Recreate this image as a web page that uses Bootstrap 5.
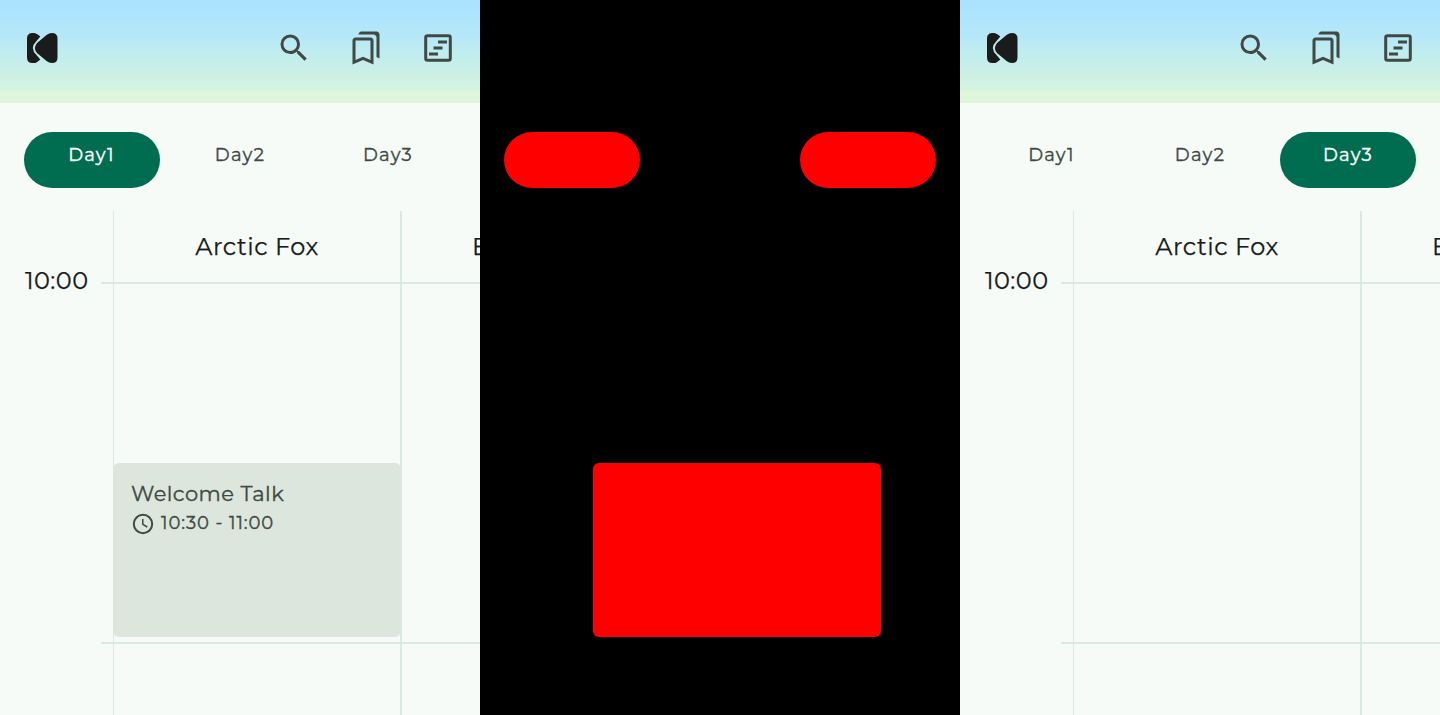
<!DOCTYPE html>
<html lang="en">
<head>
<meta charset="utf-8">
<meta name="viewport" content="width=device-width, initial-scale=1">
<title>Timetable comparison</title>
<link href="https://cdn.jsdelivr.net/npm/bootstrap@5.3.0/dist/css/bootstrap.min.css" rel="stylesheet">
<style>
body{font-family:Montserrat,Inter,"Open Sans",sans-serif;color:#191c1a;background:#f6fbf7;-webkit-text-stroke:.25px currentColor}
.screen{height:715px;background:#f6fbf7}
.diff{background:#000}
.topbar{height:103px;padding:0 24px 7px 27px;background:linear-gradient(#abe3ff 0,#abe3ff 10px,#b5e8f7 36px,#c1edef 55px,#cdf0e5 76px,#d4f3e2 90px,#ddf6dd 92px,#dff6dc 100%)}
.actions{gap:36px;color:#404943}
.topbar svg,.session svg{display:block}
.days{padding:29px 24px 0;gap:12px;height:108px}
.day{height:56px;width:136px;flex:none;border-radius:28px;text-align:center;font-size:18px;line-height:24px;padding:11px 0 0;letter-spacing:1.25px;color:#404943;-webkit-text-stroke-width:.35px}
.day:first-child{padding-right:1px}
.day.on{background:#006c50;color:#fff}
.hit{background:#f00!important}
.times{width:101px;flex:none;padding:54px 0 0 25px;font-size:24px;line-height:32px;letter-spacing:.4px}
.lines{background:linear-gradient(#dbe9e3,#dbe9e3) 0 71px/100% 2px no-repeat,linear-gradient(#dbe9e3,#dbe9e3) 0 431px/100% 2px no-repeat;padding-left:12px}
.room{width:287px;flex:none;border-left:1px solid #dbe9e3}
.next-room{border-left:2px solid #dbe9e3}
.room-name{height:71px;padding-top:20px;font-size:24px;line-height:32px;text-align:center;letter-spacing:.5px;white-space:nowrap}
.next-room .room-name{text-align:left;padding-left:70px}
.session{width:288px;height:174px;margin:181px 0 0 -1px;border-radius:6px;background:#dde6dd;color:#404943;padding:17px 18px;position:relative}
.session-title{font-size:21px;line-height:28px;letter-spacing:.45px;white-space:nowrap;-webkit-text-stroke-width:.35px}
.session-time{font-size:18px;line-height:26px;letter-spacing:.92px;gap:6px;margin-top:2px;white-space:nowrap;-webkit-text-stroke-width:.35px}
.session-time svg{margin-top:2px}
.mask{margin:275px 0 0 113px;width:288px;height:174px;border-radius:6px}
</style>
</head>
<body class="overflow-hidden">
<svg width="0" height="0" class="d-block position-absolute" aria-hidden="true">
<symbol id="logo" viewBox="0 0 31 31"><path d="M5.500 0H7Q9.500 0 13.300 3.600L9.500 8Q5.900 11.500 5.900 15Q5.900 18.500 9.500 22L13.300 26.400Q9.500 30 7 30H5.500Q0 30 0 24.500V5.500Q0 0 5.500 0Z"/><path d="M10.300 9.700L19.500 2Q22 0 25 0Q30.500 0 30.500 5.500V24.500Q30.500 30 25 30Q22 30 19.500 28L10.300 20.300Q5.400 15 10.300 9.700Z"/></symbol>
<symbol id="search" viewBox="0 0 24 24"><path d="M15.500 14h-.79l-.28-.27A6.471 6.471 0 0 0 16 9.500 6.500 6.500 0 1 0 9.500 16c1.610 0 3.090-.59 4.230-1.570l.27.28v.79l5 4.990L20.490 19l-4.990-5zm-6 0C7.010 14 5 11.990 5 9.500S7.010 5 9.500 5 14 7.010 14 9.500 11.990 14 9.500 14z"/></symbol>
<symbol id="marks" viewBox="0 0 24 24"><path d="M15 7v12.970l-4.210-1.810-.79-.34-.79.34L5 19.970V7h10m4-6H8.990C7.890 1 7 1.900 7 3h10c1.100 0 2 .9 2 2v13l2 1V3c0-1.100-.9-2-2-2zm-4 4H5c-1.100 0-2 .9-2 2v16l7-3 7 3V7c0-1.100-.9-2-2-2z"/></symbol>
<symbol id="chart" viewBox="-4 -4 36 36"><rect x="1.700" y="1.700" width="24.600" height="24.600" rx="1.800" fill="none" stroke="currentColor" stroke-width="3"/><path d="M14 6.500h9v3h-9zM9.500 12.500h9v3h-9zM5 18.500h9v3H5z"/></symbol>
</svg>
<main class="row g-0">
<section class="col-4 screen d-flex flex-column overflow-hidden">
<header class="topbar d-flex align-items-center justify-content-between">
<svg width="31" height="31" fill="#191c1a"><use href="#logo"/></svg>
<nav class="actions d-flex align-items-center">
<svg width="36" height="36" fill="currentColor"><use href="#search"/></svg>
<svg width="36" height="36" fill="currentColor"><use href="#marks"/></svg>
<svg width="36" height="36" fill="currentColor"><use href="#chart"/></svg>
</nav>
</header>
<div class="days d-flex"><div class="day on">Day1</div><div class="day">Day2</div><div class="day">Day3</div></div>
<div class="d-flex flex-grow-1">
<div class="times">10:00</div>
<div class="lines d-flex flex-grow-1 overflow-hidden">
<div class="room"><div class="room-name">Arctic Fox</div>
<div class="session"><div class="session-title">Welcome Talk</div>
<div class="session-time d-flex align-items-center"><svg width="24" height="24" viewBox="0 0 24 24" fill="none" stroke="currentColor"><circle cx="12" cy="12" r="9.200" stroke-width="2"/><path d="M11.800 7v5.300l4.500 2.700" stroke-width="1.500"/></svg><span>10:30 - 11:00</span></div></div>
</div>
<div class="next-room flex-grow-1"><div class="room-name">B</div></div>
</div></div>
</section>
<section class="col-4 screen diff overflow-hidden">
<div class="d-flex justify-content-between" style="padding:132px 24px 0"><div class="day hit"></div><div class="day hit"></div></div>
<div class="mask hit"></div>
</section>
<section class="col-4 screen d-flex flex-column overflow-hidden">
<header class="topbar d-flex align-items-center justify-content-between">
<svg width="31" height="31" fill="#191c1a"><use href="#logo"/></svg>
<nav class="actions d-flex align-items-center">
<svg width="36" height="36" fill="currentColor"><use href="#search"/></svg>
<svg width="36" height="36" fill="currentColor"><use href="#marks"/></svg>
<svg width="36" height="36" fill="currentColor"><use href="#chart"/></svg>
</nav>
</header>
<div class="days d-flex"><div class="day">Day1</div><div class="day">Day2</div><div class="day on">Day3</div></div>
<div class="d-flex flex-grow-1">
<div class="times">10:00</div>
<div class="lines d-flex flex-grow-1 overflow-hidden">
<div class="room"><div class="room-name">Arctic Fox</div></div>
<div class="next-room flex-grow-1"><div class="room-name">B</div></div>
</div></div>
</section>
</main>
<script src="https://cdn.jsdelivr.net/npm/bootstrap@5.3.0/dist/js/bootstrap.bundle.min.js"></script>
</body>
</html>
